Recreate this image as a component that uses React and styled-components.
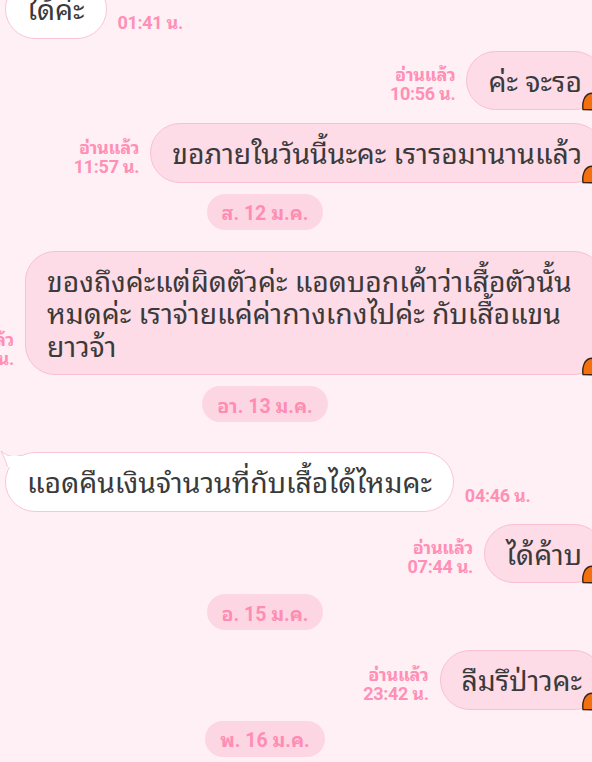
import styled, { createGlobalStyle } from 'styled-components';

const GlobalStyle = createGlobalStyle`
  html, body {
    margin: 0;
    padding: 0;
    background: #fff0f5;
    overflow: hidden;
  }
  body {
    font-family: "Noto Sans Thai Looped", "Noto Sans Thai", "Noto Sans", sans-serif;
  }
`;

const Page = styled.div`
  width: 592px;
  height: 762px;
  overflow: hidden;
  background: #fff0f5;
`;

const Thread = styled.div`
  display: flex;
  flex-direction: column;
  margin-top: -21px;
`;

const Row = styled.div`
  display: flex;
  align-items: flex-end;
  gap: 11px;
  justify-content: ${(p) => (p.$mine ? 'flex-end' : 'flex-start')};
  margin-top: ${(p) => p.$top || 0}px;
  margin-right: ${(p) => (p.$mine ? '-12px' : '0')};
  padding-left: ${(p) => (p.$mine ? '0' : '5px')};
`;

const Bubble = styled.div`
  position: relative;
  flex-shrink: 0;
  box-sizing: border-box;
  width: ${(p) => (p.$wide ? '579px' : 'auto')};
  max-width: 579px;
  padding: 12px 21px 13px 21px;
  border-radius: 30px;
  border: 1px solid ${(p) => (p.$mine ? '#f9c0d3' : '#f9c6d7')};
  background: ${(p) => (p.$mine ? '#fddbe7' : '#ffffff')};
  color: #3a3a3a;
  font-size: 28.3px;
  line-height: 32.5px;
  white-space: pre-line;
`;

const Meta = styled.div`
  flex-shrink: 0;
  display: flex;
  flex-direction: column;
  align-items: ${(p) => (p.$mine ? 'flex-end' : 'flex-start')};
  margin-bottom: 7px;
  color: #ff8fb5;
  font-family: Roboto, "Noto Sans Thai Looped", sans-serif;
  font-weight: 700;
  font-size: 18px;
  line-height: 19px;
  letter-spacing: -0.3px;
`;

const DateRow = styled.div`
  display: flex;
  justify-content: center;
  margin-top: 11px;
  padding-right: 62px;
`;

const DateChip = styled.div`
  padding: 0 15px;
  height: 36px;
  display: flex;
  align-items: center;
  border-radius: 18px;
  background: #fdd6e4;
  color: #ff8db3;
  font-family: Roboto, "Noto Sans Thai Looped", sans-serif;
  font-weight: 700;
  font-size: 19.5px;
`;

const Tail = styled.svg`
  position: absolute;
  left: -6px;
  top: -4px;
`;

const Deco = styled.svg`
  position: absolute;
  right: 2px;
  bottom: -2px;
`;

function Mine({ top, read, time, wide, children }) {
  return (
    <Row $mine $top={top}>
      <Meta $mine>
        {read && <span>อ่านแล้ว</span>}
        <span>{time}</span>
      </Meta>
      <Bubble $mine $wide={wide}>
        {children}
        <Deco width="20" height="19" viewBox="0 0 20 19">
          <path
            d="M2 17.5 C1 11 3 3 9 1.5 C14 0.6 19 3 19 9 L19 18 Z"
            fill="#f4700f"
            stroke="#3a2418"
            strokeWidth="1.4"
          />
        </Deco>
      </Bubble>
    </Row>
  );
}

function Theirs({ top, time, tail, children }) {
  return (
    <Row $top={top}>
      <Bubble>
        {tail && (
          <Tail width="22" height="18" viewBox="0 0 22 18">
            <path
              d="M21 6 C15 9 8 8 1 2 C4 8 6 12 7 17 L21 17 Z"
              fill="#ffffff"
              stroke="#f9c6d7"
              strokeWidth="1"
            />
            <rect x="8" y="7" width="14" height="11" fill="#ffffff" />
          </Tail>
        )}
        {children}
      </Bubble>
      <Meta>{time}</Meta>
    </Row>
  );
}

function DateLabel({ children }) {
  return (
    <DateRow>
      <DateChip>{children}</DateChip>
    </DateRow>
  );
}

export default function App() {
  return (
    <Page>
      <GlobalStyle />
      <Thread>
        <Theirs time="01:41 น.">ได้ค่ะ</Theirs>
        <Mine top={12} read time="10:56 น.">
          ค่ะ จะรอ
        </Mine>
        <Mine top={13} read time="11:57 น.">
          ขอภายในวันนี้นะคะ เรารอมานานแล้ว
        </Mine>
        <DateLabel>ส. 12 ม.ค.</DateLabel>
        <Mine top={21} read wide time="11:57 น.">
          {'ของถึงค่ะแต่ผิดตัวค่ะ แอดบอกเค้าว่าเสื้อตัวนั้น\nหมดค่ะ เราจ่ายแค่ค่ากางเกงไปค่ะ กับเสื้อแขน\nยาวจ้า'}
        </Mine>
        <DateLabel>อา. 13 ม.ค.</DateLabel>
        <Theirs top={30} tail time="04:46 น.">
          แอดคืนเงินจำนวนที่กับเสื้อได้ไหมคะ
        </Theirs>
        <Mine top={12} read time="07:44 น.">
          ได้ค้าบ
        </Mine>
        <DateLabel>อ. 15 ม.ค.</DateLabel>
        <Mine top={20} read time="23:42 น.">
          ลืมรึป่าวคะ
        </Mine>
        <DateLabel>พ. 16 ม.ค.</DateLabel>
      </Thread>
    </Page>
  );
}
